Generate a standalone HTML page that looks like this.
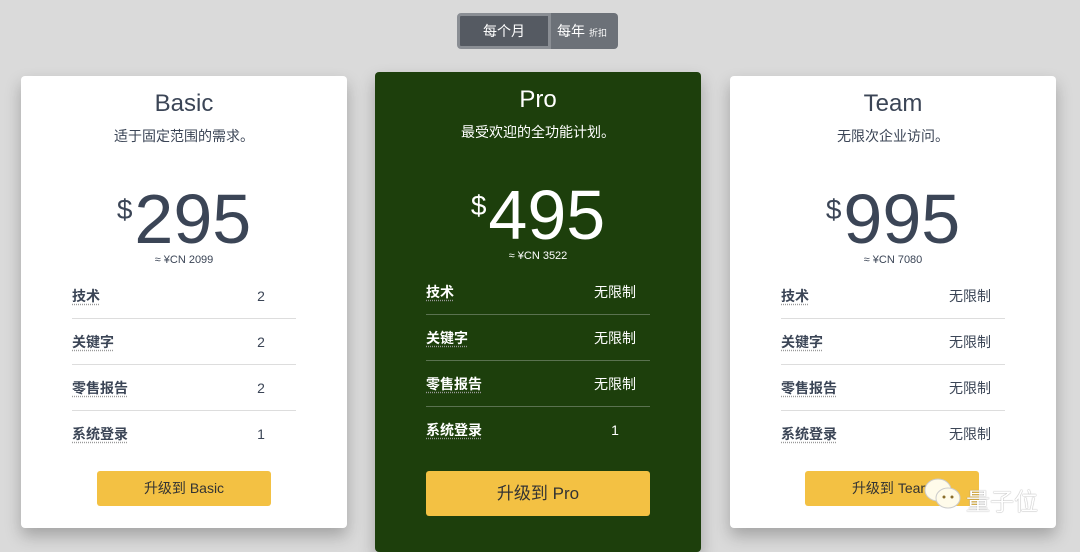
<!DOCTYPE html>
<html><head><meta charset="utf-8"><style>
*{margin:0;padding:0;box-sizing:border-box}
body{width:1080px;height:546px;background:#dadada;font-family:"Liberation Sans","Noto Sans CJK SC",sans-serif;position:relative;overflow:hidden;color:#3b4556}
.tog{position:absolute;top:13px;left:457px;height:36px;display:flex}
.t1{width:94px;background:#555a62;border:3px solid #8a8e94;border-radius:4px 0 0 4px;color:#fff;font-size:14px;text-align:center;line-height:30px}
.t2{width:67px;background:#6c7178;color:#fff;font-size:14px;line-height:36px;padding-left:6px;border-radius:0 4px 4px 0;margin-top:0}
.t2 small{font-size:9px;margin-left:4px}
.card{position:absolute;width:326px;background:#fff;border-radius:4px;box-shadow:0 8px 16px rgba(0,0,0,.25);text-align:center}
.pro{background:#1d3f0c;color:#fff}
h2{font-weight:normal;font-size:24px;position:absolute;width:100%;top:14px}
.sub{position:absolute;width:100%;top:50px;font-size:14px}
.price{position:absolute;width:100%;top:97px;font-size:70px;line-height:74px}
.price span{font-size:28px;vertical-align:24px;margin-right:2px}
.cn{position:absolute;width:100%;top:178px;font-size:11px}
.rows{position:absolute;left:51px;width:224px;top:197px}
.row{height:46px;display:flex;align-items:center;font-size:14px;border-bottom:1px solid #ddd}
.row:last-child{border-bottom:none}
.pro .row{border-color:#5a7250}
.row b{flex:1;text-align:left;text-decoration:underline dotted #999;text-underline-offset:3px}
.row i{font-style:normal;width:70px;text-align:center;margin-right:0}
.btn{position:absolute;background:#f3c143;border-radius:3px;color:#333;}
</style></head><body>
<div class="tog"><div class="t1">每个月</div><div class="t2">每年<small>折扣</small></div></div>

<div class="card" style="left:21px;top:76px;height:452px">
<h2>Basic</h2><div class="sub">适于固定范围的需求。</div>
<div class="price"><span>$</span>295</div><div class="cn">≈ ¥CN 2099</div>
<div class="rows"><div class="row"><b>技术</b><i>2</i></div><div class="row"><b>关键字</b><i>2</i></div><div class="row"><b>零售报告</b><i>2</i></div><div class="row"><b>系统登录</b><i>1</i></div></div>
<div class="btn" style="left:76px;top:395px;width:174px;height:35px;line-height:35px;font-size:14px">升级到 Basic</div>
</div>

<div class="card pro" style="left:375px;top:72px;height:480px">
<h2>Pro</h2><div class="sub">最受欢迎的全功能计划。</div>
<div class="price"><span>$</span>495</div><div class="cn">≈ ¥CN 3522</div>
<div class="rows"><div class="row"><b>技术</b><i>无限制</i></div><div class="row"><b>关键字</b><i>无限制</i></div><div class="row"><b>零售报告</b><i>无限制</i></div><div class="row"><b>系统登录</b><i>1</i></div></div>
<div class="btn" style="left:51px;top:399px;width:224px;height:45px;line-height:45px;font-size:17px">升级到 Pro</div>
</div>

<div class="card" style="left:730px;top:76px;height:452px">
<h2>Team</h2><div class="sub">无限次企业访问。</div>
<div class="price"><span>$</span>995</div><div class="cn">≈ ¥CN 7080</div>
<div class="rows"><div class="row"><b>技术</b><i>无限制</i></div><div class="row"><b>关键字</b><i>无限制</i></div><div class="row"><b>零售报告</b><i>无限制</i></div><div class="row"><b>系统登录</b><i>无限制</i></div></div>
<div class="btn" style="left:75px;top:395px;width:174px;height:35px;line-height:35px;font-size:14px">升级到 Team</div>
</div>

<svg style="position:absolute;left:920px;top:476px" width="60" height="40" viewBox="0 0 60 40">
<ellipse cx="18" cy="14" rx="13" ry="11" fill="#fffbea" stroke="#ccc"/>
<ellipse cx="28" cy="22" rx="12" ry="10" fill="#fffbea" stroke="#ccc"/>
<circle cx="24" cy="21" r="1.5" fill="#8a6d2a"/><circle cx="32" cy="21" r="1.5" fill="#8a6d2a"/>
</svg>
<div style="position:absolute;left:966px;top:482px;font-size:24px;color:#fff;text-shadow:0 0 1px #666">量子位</div>
</body></html>
